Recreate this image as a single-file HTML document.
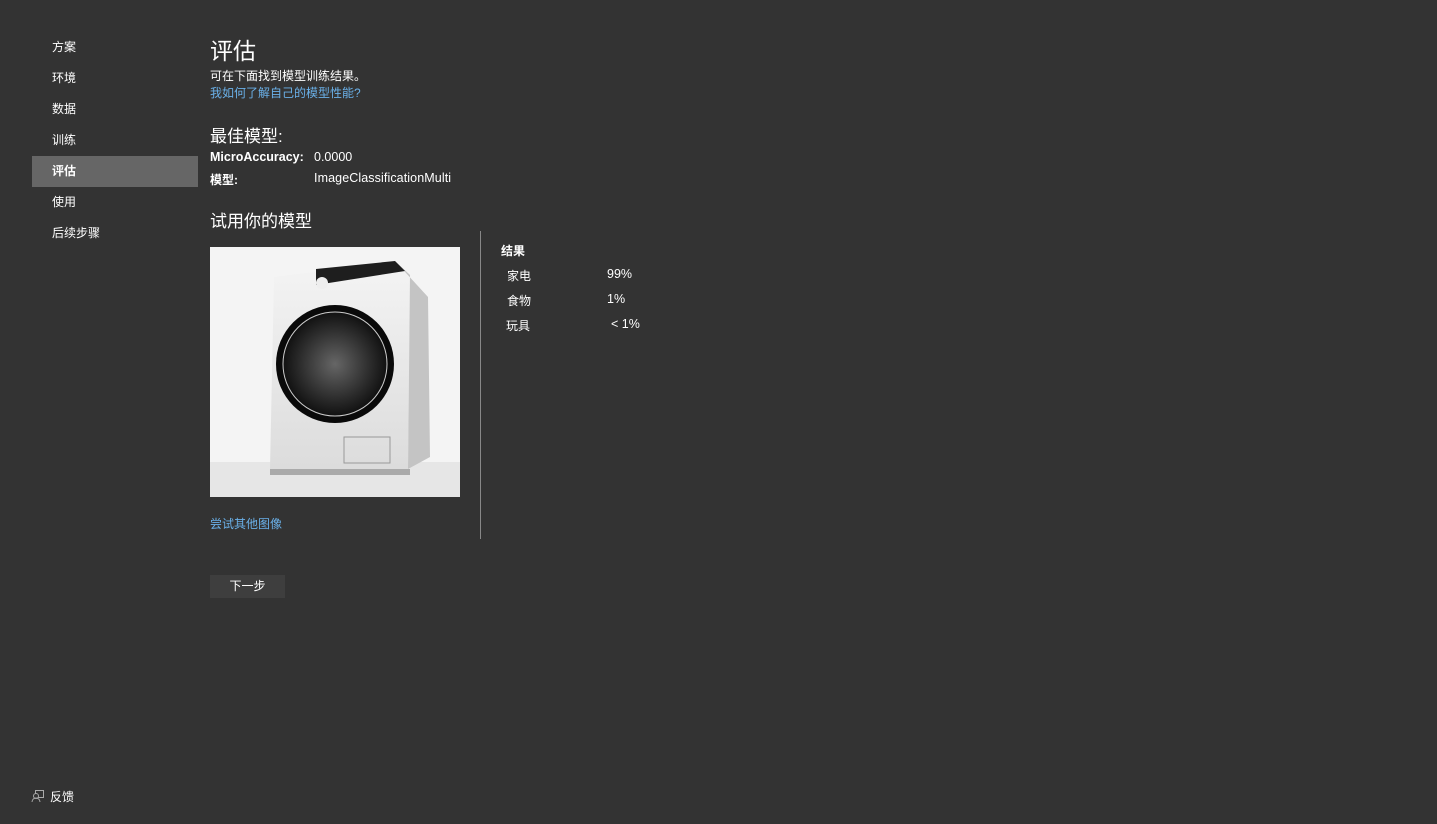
<!DOCTYPE html>
<html><head><meta charset="utf-8"><style>
*{margin:0;padding:0;box-sizing:border-box}
body{width:1437px;height:824px;background:#333;color:#fff;font-family:"Liberation Sans","Noto Sans CJK SC",sans-serif;position:relative;overflow:hidden;font-size:12px}
.a{position:absolute;white-space:nowrap}
.nav{left:32px;width:166px;height:31px;line-height:31px;padding-left:20px;font-size:12px}
.sel{background:#666;font-weight:bold}
.link{color:#6ab0e8}
</style></head><body>
<div class="a nav" style="top:32px">方案</div>
<div class="a nav" style="top:63px">环境</div>
<div class="a nav" style="top:94px">数据</div>
<div class="a nav" style="top:125px">训练</div>
<div class="a nav sel" style="top:156px">评估</div>
<div class="a nav" style="top:187px">使用</div>
<div class="a nav" style="top:218px">后续步骤</div>

<div class="a" style="left:210px;top:32px;font-size:23px">评估</div>
<div class="a" style="left:210px;top:67px">可在下面找到模型训练结果。</div>
<div class="a link" style="left:210px;top:84px">我如何了解自己的模型性能?</div>
<div class="a" style="left:210px;top:122px;font-size:17px">最佳模型:</div>
<div class="a" style="left:210px;top:150px;font-weight:bold;font-size:12.5px">MicroAccuracy:</div>
<div class="a" style="left:314px;top:150px;font-size:12.5px">0.0000</div>
<div class="a" style="left:210px;top:171px;font-weight:bold">模型:</div>
<div class="a" style="left:314px;top:171px;font-size:12.5px;letter-spacing:0.1px">ImageClassificationMulti</div>
<div class="a" style="left:210px;top:207px;font-size:17px">试用你的模型</div>

<svg class="a" style="left:210px;top:247px" width="250" height="250" viewBox="0 0 250 250">
<defs>
<radialGradient id="d"><stop offset="0" stop-color="#666"/><stop offset="0.7" stop-color="#2a2a2a"/><stop offset="1" stop-color="#111"/></radialGradient>
<linearGradient id="f" x1="0" y1="0" x2="0" y2="1"><stop offset="0" stop-color="#f4f4f4"/><stop offset="1" stop-color="#dcdcdc"/></linearGradient></defs>
<rect width="250" height="250" fill="#f4f4f4"/>
<rect y="215" width="250" height="35" fill="#e6e6e6"/>
<polygon points="64,30 185,14 200,28 198,222 60,222" fill="url(#f)"/>
<polygon points="185,14 200,28 198,222 220,210 218,50" fill="#c4c4c4"/>
<polygon points="106,22 185,14 195,24 106,38" fill="#1e1e1e"/>
<circle cx="112" cy="36" r="6" fill="#eee"/>
<circle cx="125" cy="117" r="59" fill="#0a0a0a"/>
<circle cx="125" cy="117" r="52" fill="url(#d)" stroke="#ccc" stroke-width="1"/>
<rect x="134" y="190" width="46" height="26" fill="none" stroke="#999"/>
<rect x="60" y="222" width="140" height="6" fill="#aaa"/>
</svg>
<div class="a link" style="left:210px;top:515px">尝试其他图像</div>
<div class="a" style="left:480px;top:231px;width:1px;height:308px;background:#888"></div>
<div class="a" style="left:501px;top:242px;font-weight:bold">结果</div>
<div class="a" style="left:507px;top:267px">家电</div><div class="a" style="left:607px;top:267px;font-size:12.5px">99%</div>
<div class="a" style="left:507px;top:292px">食物</div><div class="a" style="left:607px;top:292px;font-size:12.5px">1%</div>
<div class="a" style="left:506px;top:317px">玩具</div><div class="a" style="left:611px;top:317px;font-size:12.5px">&lt; 1%</div>
<div class="a" style="left:210px;top:575px;width:75px;height:23px;background:#3e3e3e;text-align:center;line-height:23px">下一步</div>
<svg class="a" style="left:31px;top:789px" width="14" height="14" viewBox="0 0 14 14" fill="none" stroke="#aaa" stroke-width="1"><rect x="4.5" y="1.5" width="8" height="7"/><circle cx="5" cy="7" r="2.5" fill="#333"/><path d="M1 13c0-2.5 2-4 4-4s4 1.5 4 4"/></svg>
<div class="a" style="left:50px;top:788px">反馈</div>
</body></html>
